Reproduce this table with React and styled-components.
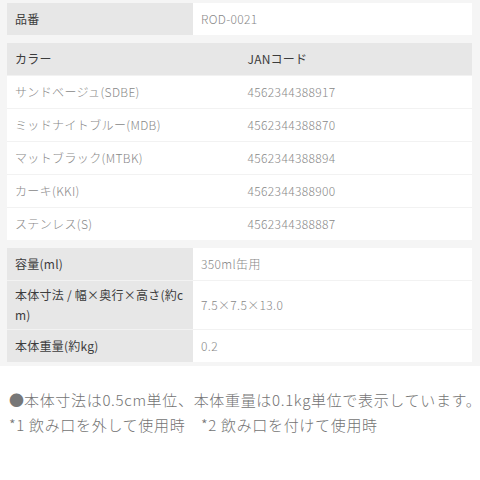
import styled, { createGlobalStyle } from "styled-components";

const GlobalStyle = createGlobalStyle`
  html, body {
    margin: 0;
    padding: 0;
    background: #fff;
  }
  body {
    font-family: "Noto Sans CJK JP", "Noto Sans", sans-serif;
  }
`;

const Panel = styled.section`
  background: #f5f5f5;
  padding: 3px 8px 4px 7px;
  display: flex;
  flex-direction: column;
  gap: 8px;
`;

const Table = styled.table`
  width: 100%;
  border-collapse: collapse;
  table-layout: fixed;
  font-size: 12px;
  letter-spacing: 0.03em;
  tr + tr th,
  tr + tr td {
    border-top: 1px solid #f2f2f2;
  }
`;

const Label = styled.th`
  box-sizing: border-box;
  width: ${(p) => p.$width || "auto"};
  background: #e7e7e7;
  color: #3c3c3c;
  font-weight: 400;
  letter-spacing: 0.02em;
  text-align: left;
  padding: 0 8px;
  height: ${(p) => p.$h || 32}px;
  line-height: 20px;
  word-break: break-all;
`;

const Cell = styled.td`
  box-sizing: border-box;
  background: #fff;
  color: #888;
  font-weight: 300;
  padding: 0 8px;
  height: ${(p) => p.$h || 32}px;
  line-height: 20px;
`;

const Notes = styled.div`
  padding: 21px 0 0 9px;
  color: #737373;
  font-size: 15px;
  font-weight: 300;
  line-height: 25px;
  letter-spacing: 0.045em;
  white-space: nowrap;
`;

const Dot = styled.span`
  color: #777;
  letter-spacing: 0;
`;

const colors = [
  ["サンドベージュ(SDBE)", "4562344388917"],
  ["ミッドナイトブルー(MDB)", "4562344388870"],
  ["マットブラック(MTBK)", "4562344388894"],
  ["カーキ(KKI)", "4562344388900"],
  ["ステンレス(S)", "4562344388887"],
];

const specs = [
  ["容量(ml)", "350ml缶用", 32],
  ["本体寸法 / 幅×奥行×高さ(約cm)", "7.5×7.5×13.0", 49],
  ["本体重量(約kg)", "0.2", 33],
];

const App = () => (
  <>
    <GlobalStyle />
    <Panel>
      <Table>
        <tbody>
          <tr>
            <Label $width="40%">品番</Label>
            <Cell>ROD-0021</Cell>
          </tr>
        </tbody>
      </Table>

      <Table>
        <tbody>
          <tr>
            <Label $width="50%">カラー</Label>
            <Label>JANコード</Label>
          </tr>
          {colors.map(([name, code]) => (
            <tr key={code}>
              <Cell $h={33}>{name}</Cell>
              <Cell $h={33}>{code}</Cell>
            </tr>
          ))}
        </tbody>
      </Table>

      <Table>
        <tbody>
          {specs.map(([label, value, h]) => (
            <tr key={label}>
              <Label $width="40%" $h={h}>{label}</Label>
              <Cell $h={h}>{value}</Cell>
            </tr>
          ))}
        </tbody>
      </Table>
    </Panel>

    <Notes>
      <div>
        <Dot>●</Dot>本体寸法は0.5cm単位、本体重量は0.1kg単位で表示しています。
      </div>
      <div>*1 飲み口を外して使用時　*2 飲み口を付けて使用時</div>
    </Notes>
  </>
);

export default App;
